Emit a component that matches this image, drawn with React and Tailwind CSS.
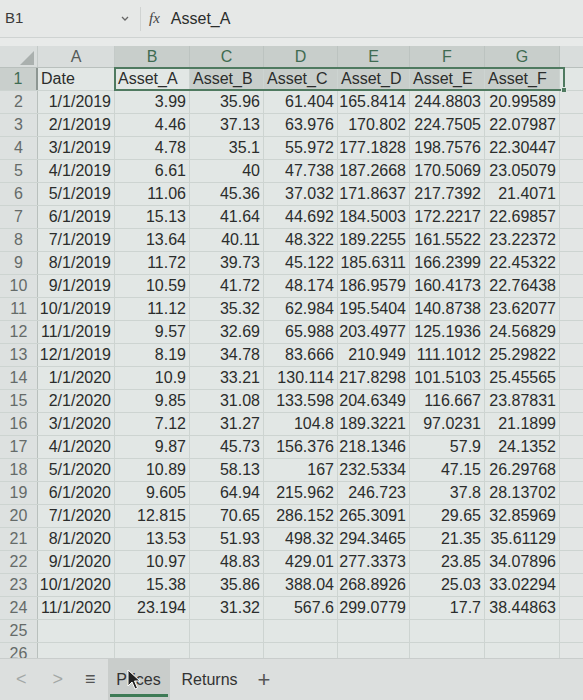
import React from 'react'

const cols = [
    { key: 'A', w: 'w-[77px]' },
    { key: 'B', w: 'w-[75px]' },
    { key: 'C', w: 'w-[74px]' },
    { key: 'D', w: 'w-[74px]' },
    { key: 'E', w: 'w-[72px]' },
    { key: 'F', w: 'w-[75px]' },
    { key: 'G', w: 'w-[75px]' },
]

const rows = [
    ['1/1/2019', '3.99', '35.96', '61.404', '165.8414', '244.8803', '20.99589'],
    ['2/1/2019', '4.46', '37.13', '63.976', '170.802', '224.7505', '22.07987'],
    ['3/1/2019', '4.78', '35.1', '55.972', '177.1828', '198.7576', '22.30447'],
    ['4/1/2019', '6.61', '40', '47.738', '187.2668', '170.5069', '23.05079'],
    ['5/1/2019', '11.06', '45.36', '37.032', '171.8637', '217.7392', '21.4071'],
    ['6/1/2019', '15.13', '41.64', '44.692', '184.5003', '172.2217', '22.69857'],
    ['7/1/2019', '13.64', '40.11', '48.322', '189.2255', '161.5522', '23.22372'],
    ['8/1/2019', '11.72', '39.73', '45.122', '185.6311', '166.2399', '22.45322'],
    ['9/1/2019', '10.59', '41.72', '48.174', '186.9579', '160.4173', '22.76438'],
    ['10/1/2019', '11.12', '35.32', '62.984', '195.5404', '140.8738', '23.62077'],
    ['11/1/2019', '9.57', '32.69', '65.988', '203.4977', '125.1936', '24.56829'],
    ['12/1/2019', '8.19', '34.78', '83.666', '210.949', '111.1012', '25.29822'],
    ['1/1/2020', '10.9', '33.21', '130.114', '217.8298', '101.5103', '25.45565'],
    ['2/1/2020', '9.85', '31.08', '133.598', '204.6349', '116.667', '23.87831'],
    ['3/1/2020', '7.12', '31.27', '104.8', '189.3221', '97.0231', '21.1899'],
    ['4/1/2020', '9.87', '45.73', '156.376', '218.1346', '57.9', '24.1352'],
    ['5/1/2020', '10.89', '58.13', '167', '232.5334', '47.15', '26.29768'],
    ['6/1/2020', '9.605', '64.94', '215.962', '246.723', '37.8', '28.13702'],
    ['7/1/2020', '12.815', '70.65', '286.152', '265.3091', '29.65', '32.85969'],
    ['8/1/2020', '13.53', '51.93', '498.32', '294.3465', '21.35', '35.61129'],
    ['9/1/2020', '10.97', '48.83', '429.01', '277.3373', '23.85', '34.07896'],
    ['10/1/2020', '15.38', '35.86', '388.04', '268.8926', '25.03', '33.02294'],
    ['11/1/2020', '23.194', '31.32', '567.6', '299.0779', '17.7', '38.44863'],
    ['', '', '', '', '', '', ''],
    ['', '', '', '', '', '', ''],
]

const header = ['Date', 'Asset_A', 'Asset_B', 'Asset_C', 'Asset_D', 'Asset_E', 'Asset_F']

export default function App() {
    return (
        <div className="w-[583px] h-[700px] flex flex-col overflow-hidden bg-[#e2e7e5] text-[#2b2d2c] relative" style={{ fontFamily: '"Liberation Sans", Arial, sans-serif' }}>
            {/* formula bar */}
            <div className="h-[38px] flex items-center bg-[#e6e8e7] border-b border-[#cfd3d2] text-[15px]">
                <div className="w-[140px] flex items-center justify-between pl-[5px] pr-[10px]">
                    <span className="text-[#3a3a3a]">B1</span>
                    <svg width="10" height="8" viewBox="0 0 10 8"><path d="M2 2 L5 5 L8 2" stroke="#666" strokeWidth="1.3" fill="none" /></svg>
                </div>
                <div className="h-[24px] w-px bg-[#d0d3d2]" />
                <span className="ml-[8px] text-[#444] italic" style={{ fontFamily: '"Liberation Serif", serif' }}>fx</span>
                <span className="ml-[11px] text-[16px]">Asset_A</span>
            </div>
            <div className="h-[8px] bg-[#e8eae9]" />

            {/* grid */}
            <div className="flex-1 overflow-hidden relative">
                {/* column headers */}
                <div className="flex h-[22px] bg-[#d9dddc] border-b border-[#b9c0bd]">
                    <div className="w-[38px] relative border-r border-[#c4cac8]">
                        <svg className="absolute right-[3px] bottom-[2px]" width="14" height="14" viewBox="0 0 14 14"><path d="M14 0 L14 14 L0 14 Z" fill="#aab0ae" /></svg>
                    </div>
                    {cols.map((c, i) => (
                        <div key={c.key} className={`${c.w} flex items-center justify-center text-[16px] border-r ${i === 0 ? 'border-[#c4cac8] text-[#555a58]' : 'border-[#bcc3c0] bg-[#c8cecb] text-[#3f6b52]'}`}>{c.key}</div>
                    ))}
                    <div className="flex-1" />
                </div>

                {/* row 1 */}
                <div className="flex h-[23px] border-b border-[#cdd4d1] relative">
                    <div className="w-[38px] flex items-center justify-center text-[16px] text-[#3f6b52] bg-[#c9cfcc] border-r-2 border-[#8d9692]">1</div>
                    {header.map((h, i) => (
                        <div key={i} className={`${cols[i].w} flex items-center pl-[3px] text-[16px] border-r border-[#cdd4d1] ${i > 1 ? 'bg-[#c8cecb]' : ''}`}>{h}</div>
                    ))}
                    <div className="flex-1" />
                    <div className="absolute left-[114px] top-[-1px] w-[451px] h-[24px] border-2 border-[#4f7a60]" />
                    <div className="absolute left-[561px] top-[19px] w-[6px] h-[6px] bg-[#4f7a60] border border-[#e2e7e5]" />
                </div>

                {rows.map((r, ri) => (
                    <div key={ri} className="flex h-[23px] border-b border-[#cdd4d1]">
                        <div className="w-[38px] flex items-center justify-center text-[16px] text-[#656b69] bg-[#dde1e0] border-r border-[#b9c0bd]">{ri + 2}</div>
                        {r.map((v, i) => (
                            <div key={i} className={`${cols[i].w} flex items-center justify-end pr-[3px] text-[16px] border-r border-[#cdd4d1]`}>{v}</div>
                        ))}
                        <div className="flex-1 bg-[#e3e6e5]" />
                    </div>
                ))}
            </div>

            {/* sheet tabs */}
            <div className="h-[42px] flex items-center bg-[#dcdfde] border-t border-[#c9cdcc] text-[16px] relative">
                <span className="ml-[16px] text-[#a3a8a6] text-[18px]">&lt;</span>
                <span className="ml-[26px] text-[#a3a8a6] text-[18px]">&gt;</span>
                <span className="ml-[22px] text-[#555] text-[18px]">≡</span>
                <div className="ml-[12px] h-full w-[62px] bg-[#c9cdcb] flex items-center justify-center relative">
                    <span className="text-[#333]">Prices</span>
                    <div className="absolute left-[2px] right-[2px] bottom-[3px] h-[3px] bg-[#3d7a55]" />
                </div>
                <span className="ml-[12px] text-[#333]">Returns</span>
                <span className="ml-[20px] text-[#555] text-[22px] font-light">+</span>
                <svg className="absolute left-[127px] top-[10px]" width="14" height="22" viewBox="0 0 14 22">
                    <path d="M1 1 L1 17 L5 13 L8 20 L10.5 19 L7.5 12 L13 12 Z" fill="#222" stroke="#fff" strokeWidth="1" />
                </svg>
            </div>
        </div>
    )
}
